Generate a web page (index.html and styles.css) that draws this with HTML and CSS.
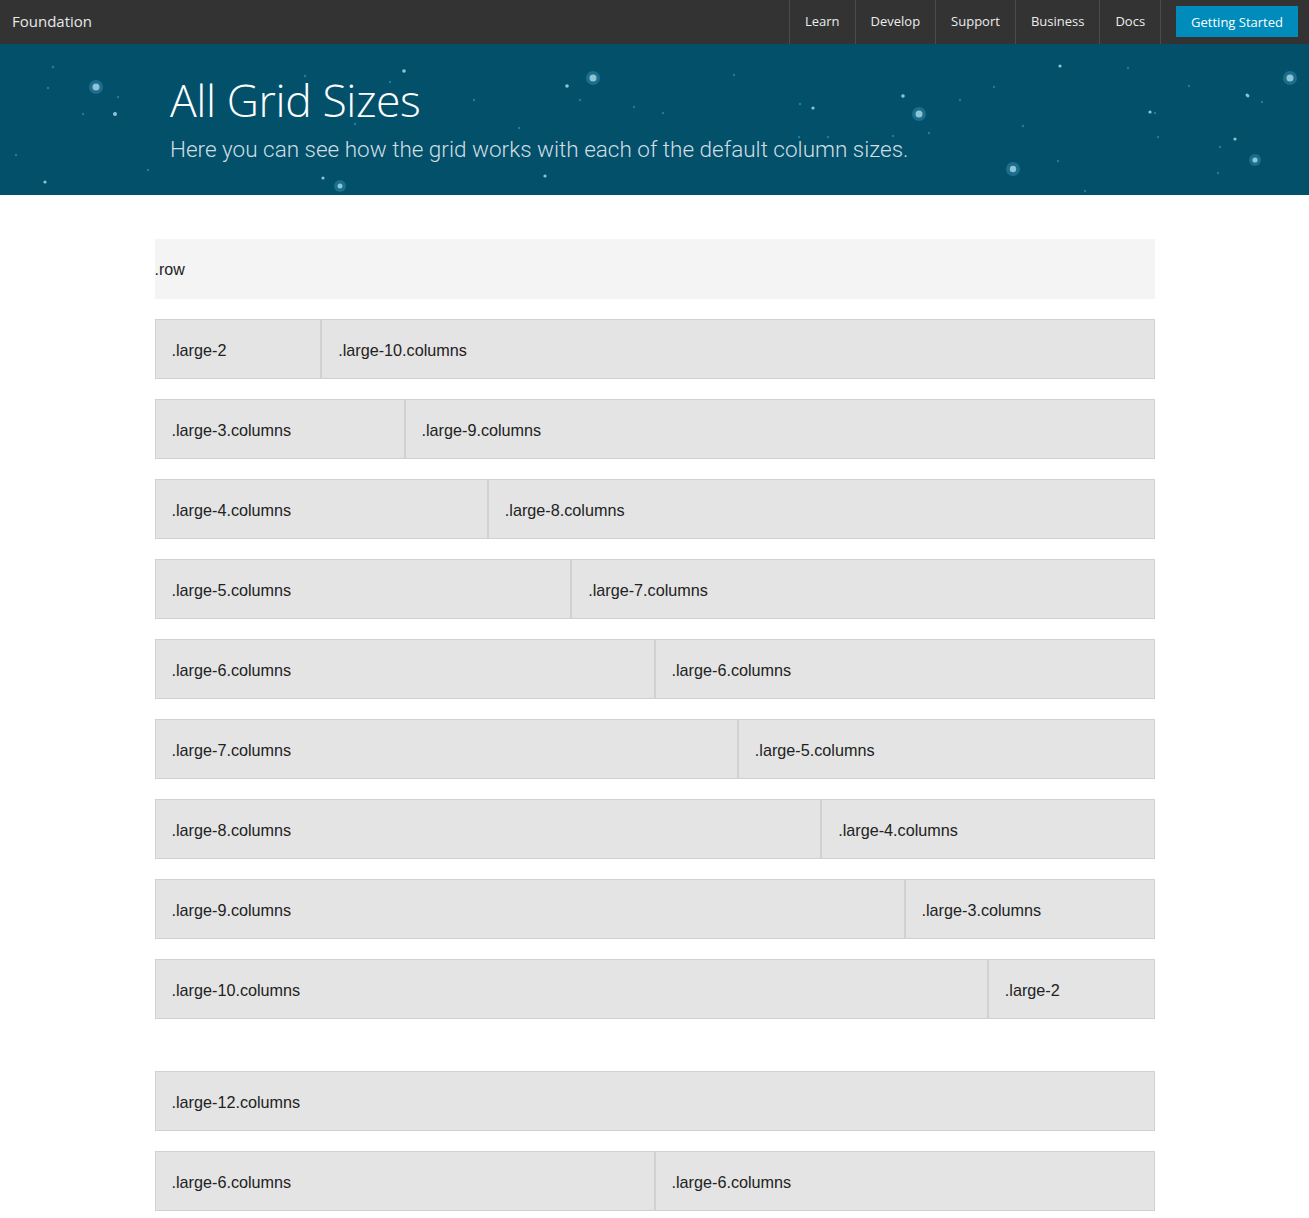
FILE: index.html
```html
<!DOCTYPE html>
<html lang="en">
<head>
<meta charset="utf-8">
<title>All Grid Sizes</title>
<link rel="stylesheet" href="styles.css">
</head>
<body>
<nav class="topbar">
  <a class="brand" href="#">Foundation</a>
  <ul class="menu">
    <li class="menu-item"><a href="#">Learn</a></li>
    <li class="menu-item"><a href="#">Develop</a></li>
    <li class="menu-item"><a href="#">Support</a></li>
    <li class="menu-item"><a href="#">Business</a></li>
    <li class="menu-item last"><a href="#">Docs</a></li>
  </ul>
  <a class="cta" href="#">Getting Started</a>
</nav>

<header class="hero">
  <svg class="stars" width="1309" height="151" viewBox="0 44 1309 151" aria-hidden="true">
    <g fill="#2f88a8" opacity="0.55">
      <circle cx="96" cy="87" r="7"/><circle cx="593" cy="78" r="7"/><circle cx="919" cy="114" r="7"/>
      <circle cx="1013" cy="169" r="7"/><circle cx="1290" cy="78" r="7"/><circle cx="340" cy="186" r="6"/>
      <circle cx="1255" cy="160" r="6"/>
    </g>
    <g fill="#8fc3d6">
      <circle cx="96" cy="87" r="3.5"/><circle cx="593" cy="78" r="3.5"/><circle cx="919" cy="114" r="3.5"/>
      <circle cx="1013" cy="169" r="3.2"/><circle cx="1290" cy="78" r="3.5"/><circle cx="340" cy="186" r="2.5"/>
      <circle cx="1255" cy="160" r="2.6"/>
      <circle cx="115" cy="114" r="2"/><circle cx="45" cy="182" r="1.6"/><circle cx="404" cy="71" r="1.8"/>
      <circle cx="567" cy="86" r="1.8"/><circle cx="903" cy="96" r="1.8"/><circle cx="813" cy="108" r="1.6"/>
      <circle cx="1060" cy="66" r="1.6"/><circle cx="1150" cy="112" r="1.6"/><circle cx="1235" cy="139" r="1.6"/>
      <circle cx="1247" cy="95" r="1.5"/><circle cx="545" cy="176" r="1.6"/><circle cx="323" cy="178" r="1.6"/>
      <circle cx="1232" cy="208" r="1.5"/><circle cx="1248" cy="96" r="1.4"/>
    </g>
    <g fill="#1a7fa6">
      <circle cx="53" cy="67" r="1.3"/><circle cx="118" cy="97" r="1.2"/><circle cx="83" cy="114" r="1.2"/>
      <circle cx="16" cy="155" r="1.2"/><circle cx="148" cy="170" r="1.2"/><circle cx="305" cy="76" r="1.2"/>
      <circle cx="355" cy="124" r="1.2"/><circle cx="390" cy="82" r="1.2"/><circle cx="474" cy="100" r="1.2"/>
      <circle cx="519" cy="128" r="1.2"/><circle cx="580" cy="100" r="1.2"/><circle cx="634" cy="107" r="1.2"/>
      <circle cx="663" cy="113" r="1.2"/><circle cx="734" cy="75" r="1.2"/><circle cx="800" cy="104" r="1.2"/>
      <circle cx="799" cy="137" r="1.2"/><circle cx="828" cy="137" r="1.2"/><circle cx="893" cy="136" r="1.2"/>
      <circle cx="929" cy="133" r="1.2"/><circle cx="960" cy="100" r="1.2"/><circle cx="994" cy="87" r="1.2"/>
      <circle cx="1023" cy="126" r="1.2"/><circle cx="1058" cy="161" r="1.2"/><circle cx="1085" cy="191" r="1.2"/>
      <circle cx="1128" cy="68" r="1.2"/><circle cx="1158" cy="137" r="1.2"/><circle cx="1189" cy="86" r="1.2"/>
      <circle cx="1155" cy="113" r="1.2"/><circle cx="1220" cy="147" r="1.2"/><circle cx="1262" cy="102" r="1.2"/>
      <circle cx="1218" cy="173" r="1.2"/><circle cx="700" cy="198" r="1.2"/><circle cx="48" cy="88" r="1.2"/>
    </g>
  </svg>
  <div class="hero-inner">
    <h1 class="hero-title">All Grid Sizes</h1>
    <p class="hero-sub">Here you can see how the grid works with each of the default column sizes.</p>
  </div>
</header>

<main class="content">
  <div class="row-label">.row</div>

  <div class="grid-row"><div class="col c2">.large-2</div><div class="col c10">.large-10.columns</div></div>
  <div class="grid-row"><div class="col c3">.large-3.columns</div><div class="col c9">.large-9.columns</div></div>
  <div class="grid-row"><div class="col c4">.large-4.columns</div><div class="col c8">.large-8.columns</div></div>
  <div class="grid-row"><div class="col c5">.large-5.columns</div><div class="col c7">.large-7.columns</div></div>
  <div class="grid-row"><div class="col c6">.large-6.columns</div><div class="col c6">.large-6.columns</div></div>
  <div class="grid-row"><div class="col c7">.large-7.columns</div><div class="col c5">.large-5.columns</div></div>
  <div class="grid-row"><div class="col c8">.large-8.columns</div><div class="col c4">.large-4.columns</div></div>
  <div class="grid-row"><div class="col c9">.large-9.columns</div><div class="col c3">.large-3.columns</div></div>
  <div class="grid-row"><div class="col c10">.large-10.columns</div><div class="col c2">.large-2</div></div>

  <div class="grid-row spaced"><div class="col c12">.large-12.columns</div></div>
  <div class="grid-row"><div class="col c6">.large-6.columns</div><div class="col c6">.large-6.columns</div></div>
</main>
</body>
</html>
```

FILE: styles.css
```css
* { box-sizing: border-box; }

html, body {
  margin: 0;
  padding: 0;
  background: #fff;
}

body {
  font-family: "Liberation Sans", Arial, sans-serif;
  color: #222;
}

a { text-decoration: none; }

/* top bar */
.topbar {
  height: 44px;
  background: #333333;
  display: flex;
  align-items: center;
}

.brand {
  font-family: "Open Sans", sans-serif;
  font-size: 15px;
  color: #e8e8e8;
  padding: 0 0 2px 12px;
  flex: 1;
}

.menu {
  list-style: none;
  margin: 0;
  padding: 0;
  display: flex;
  height: 44px;
}

.menu-item {
  border-left: 1px solid #4b4b4b;
  display: flex;
  align-items: center;
  padding-bottom: 2px;
}

.menu-item.last { border-right: 1px solid #4b4b4b; }

.menu-item a {
  font-family: "Open Sans", sans-serif;
  font-size: 13px;
  color: #ececec;
  padding: 0 15px;
}

.cta {
  font-family: "Open Sans", sans-serif;
  font-size: 13px;
  color: #fff;
  background: #008cba;
  height: 31px;
  line-height: 32px;
  padding: 0 15px;
  margin: 0 11px 1px 15px;
}

/* hero */
.hero {
  position: relative;
  height: 151px;
  background: #03506b;
  overflow: hidden;
}

.stars {
  position: absolute;
  left: 0;
  top: 0;
}

.hero-inner {
  position: relative;
  padding: 28px 0 0 170px;
}

.hero-title {
  margin: 0;
  font-family: "Open Sans", sans-serif;
  font-weight: 300;
  font-size: 44.5px;
  line-height: 56px;
  color: #fff;
  letter-spacing: -0.4px;
}

.hero-sub {
  margin: 7px 0 0 0;
  font-family: Roboto, "Liberation Sans", sans-serif;
  font-weight: 300;
  font-size: 22.5px;
  line-height: 28px;
  color: #d0dde2;
}

/* content */
.content {
  width: 1000px;
  margin: 44px auto 0;
  display: flex;
  flex-direction: column;
  gap: 20px;
  padding-bottom: 40px;
}

.row-label {
  height: 60px;
  background: #f4f4f4;
  font-size: 16px;
  display: flex;
  align-items: center;
  padding-top: 2px;
}

.grid-row {
  display: grid;
  grid-template-columns: repeat(12, 1fr);
  height: 60px;
}

.grid-row.spaced { margin-top: 32px; }

.col {
  background: #e4e4e4;
  border: 1px solid #d1d1d1;
  padding: 3px 0 0 16px;
  font-size: 16.2px;
  color: #222;
  display: flex;
  align-items: center;
  min-width: 0;
}

.c2 { grid-column: span 2; }
.c3 { grid-column: span 3; }
.c4 { grid-column: span 4; }
.c5 { grid-column: span 5; }
.c6 { grid-column: span 6; }
.c7 { grid-column: span 7; }
.c8 { grid-column: span 8; }
.c9 { grid-column: span 9; }
.c10 { grid-column: span 10; }
.c12 { grid-column: span 12; }
```
